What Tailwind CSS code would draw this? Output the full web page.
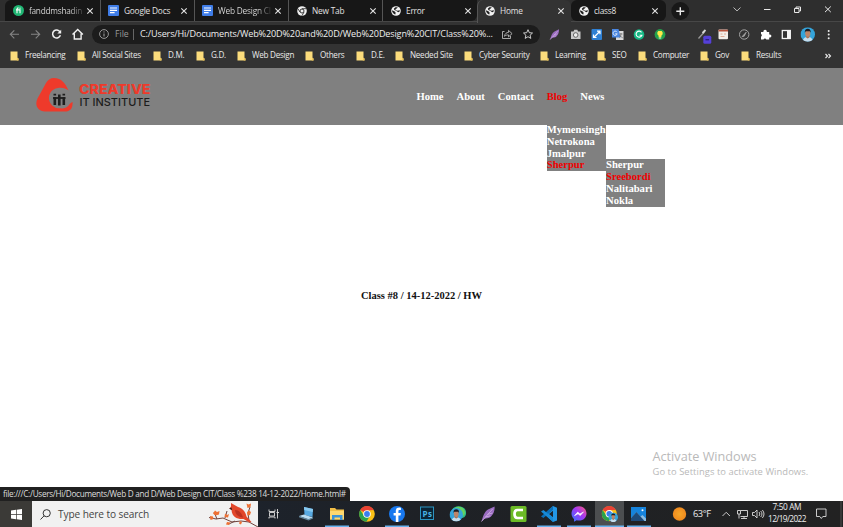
<!DOCTYPE html>
<html lang="en">
<head>
<meta charset="utf-8">
<title>Home</title>
<script src="https://cdn.jsdelivr.net/npm/@tailwindcss/browser@4"></script>
</head>
<body class="w-[843px] h-[527px] overflow-hidden bg-white font-['Open_Sans','Noto_Sans',sans-serif] flex flex-col relative">
<svg class="hidden">
  <symbol id="x" viewBox="0 0 8 8"><path d="M1.3 1.3l5.4 5.4M6.7 1.3L1.3 6.7" stroke="#e4e4e4" stroke-width="1.1"/></symbol>
  <symbol id="globe" viewBox="0 0 10 10"><circle cx="5" cy="5" r="4.8" fill="#f2f2f2"/><path d="M1 4.3L3.4 5.2 4.6 6.4 4.4 8.4 3 7.9 1.3 6zM4.3 1.2L6.8 1.3 5.8 2.6 4.6 2.9 4.6 4.2 7 4.8 8.7 4.1 8.5 5.8 7.1 6.2 5.9 5.3 3.4 4.1 2.8 2.7z" fill="#222"/></symbol>
  <symbol id="doc" viewBox="0 0 11 11"><rect width="11" height="11" rx="1" fill="#3f7de8"/><path d="M2 3h7M2 5.3h7M2 7.7h4.6" stroke="#fff" stroke-width="1.2"/></symbol>
  <symbol id="fold" viewBox="0 0 9 10"><path d="M.5.5h7v6.2l1 .8v2h-8z" fill="#fbdc7c"/><path d="M7.3 6.7l1.2.8v2H6.7z" fill="#e9c255"/></symbol>
  <symbol id="chrome" viewBox="0 0 16 16"><circle cx="8" cy="8" r="7.8" fill="#fbc116"/><path d="M8 8L1.2 4.1A7.8 7.8 0 0 1 14.8 4.1L8 4.4z" fill="#e94235"/><path d="M1.2 4.1A7.8 7.8 0 0 0 7.4 15.8L11 9.8 8 8 5 9.7z" fill="#2ba24c"/><circle cx="8" cy="8" r="3.8" fill="#fff"/><circle cx="8" cy="8" r="2.9" fill="#3b7ded"/></symbol>
  <symbol id="feather" viewBox="0 0 14 16"><path d="M.5 15.5C2 11 3 6 7 3.6L13.5.5C14 4 12.8 8 9.8 10.8 7.8 12.6 5 12.4 3.2 13z" fill="#9a6cc0"/><path d="M.5 15.5L11.8 2.8M4.5 11l4.8-1.2M6.5 8.4l5-1.4" stroke="#d9bdea" stroke-width=".7" fill="none"/></symbol>
  <symbol id="face" viewBox="0 0 14 14"><circle cx="7" cy="7" r="7" fill="#35a4da"/><path d="M2.400 12.300c.8-2.300 2.600-2.800 4.600-2.800s3.800.5 4.600 2.800a7 7 0 0 1-9.200 0z" fill="#c4dcec"/><path d="M5.400 7.500h3.200V10L7 11 5.400 10z" fill="#a87358"/><ellipse cx="7" cy="6" rx="2.500" ry="3.300" fill="#bd8569"/><path d="M4.200 5.300C3.800 2.400 5.200 1.400 7 1.400s3.200 1 2.800 3.900L9 3.900H5z" fill="#1c1c22"/></symbol>
</svg>

<!-- tab strip -->
<header class="h-[68px] shrink-0 bg-[#333333] text-[#e2e2e2] flex flex-col">
  <div class="h-[22px] flex bg-[#2e2e2e] border-b border-[#474747] text-[8.300px] tracking-[-0.2px] leading-[21px] whitespace-nowrap">
    <div class="ml-[5px] w-[96px] rounded-tl-md bg-[#171717] flex items-center pl-2 border-r border-[#555]">
      <svg class="size-[11px]" viewBox="0 0 11 11"><circle cx="5.5" cy="5.5" r="5.5" fill="#20b573"/><path d="M4 8.300V4.200Q4 2.900 5.500 2.900M3 4.900h4v3.400" stroke="#fff" stroke-width="1.100" fill="none"/><circle cx="7" cy="3.200" r=".6" fill="#fff"/></svg>
      <span class="ml-[5px] w-[54px] tracking-[-0.27px] bg-gradient-to-r from-[#e2e2e2] from-75% to-[#444] bg-clip-text text-transparent">fanddmshadin</span><svg class="size-2 ml-[3px]"><use href="#x"/></svg>
    </div>
    <div class="w-[94px] bg-[#171717] flex items-center pl-[7px] border-r border-[#555]">
      <svg class="size-[11px]"><use href="#doc"/></svg><span class="ml-[5px] w-[56px]">Google Docs</span><svg class="size-2"><use href="#x"/></svg>
    </div>
    <div class="w-[94px] bg-[#171717] flex items-center pl-[7px] border-r border-[#555]">
      <svg class="size-[11px]"><use href="#doc"/></svg><span class="ml-[5px] w-[53px] bg-gradient-to-r from-[#e2e2e2] from-75% to-[#333] bg-clip-text text-transparent">Web Design CI</span><svg class="size-2 ml-[3px]"><use href="#x"/></svg>
    </div>
    <div class="w-[94px] bg-[#171717] flex items-center pl-2 border-r border-[#555]">
      <svg class="size-[10px]" viewBox="0 0 10 10"><circle cx="5" cy="5" r="4.8" fill="#eee"/><circle cx="5" cy="5" r="2" fill="#eee" stroke="#222" stroke-width=".9"/><path d="M5 2.7h4.2M3 6.1L1 2.8M7 6.2L5 9.5" stroke="#222" stroke-width=".8"/></svg><span class="ml-[5px] w-[57px]">New Tab</span><svg class="size-2"><use href="#x"/></svg>
    </div>
    <div class="w-[94px] bg-[#171717] rounded-br-md flex items-center pl-2">
      <svg class="size-[10px]"><use href="#globe"/></svg><span class="ml-[5px] w-[58px]">Error</span><svg class="size-2"><use href="#x"/></svg>
    </div>
    <div class="w-[94px] h-[23px] pb-[2px] bg-[#333333] rounded-t-md border-l border-[#555] flex items-center pl-[7px]">
      <svg class="size-[10px]"><use href="#globe"/></svg><span class="ml-[5px] w-[57px]">Home</span><svg class="size-2"><use href="#x"/></svg>
    </div>
    <div class="w-[95px] bg-[#171717] rounded-b-md rounded-t-md flex items-center pl-2">
      <svg class="size-[10px]"><use href="#globe"/></svg><span class="ml-[5px] w-[57px]">class8</span><svg class="size-2"><use href="#x"/></svg>
    </div>
    <svg class="w-[177px] h-[21px]" viewBox="666 0 177 21" fill="none" stroke="#e8e8e8"><circle cx="680.3" cy="11" r="9" fill="#181818" stroke="none"/><path d="M676.3 11.2h8M680.3 7.2v8" stroke-width="1.4"/><path d="M733.500 7.500l3.500 3.400L740.500 7.500" stroke="#bbb"/><path d="M764 9.500h6.500"/><path d="M794.500 8.500h4.500v4h-4.500zM796 8.300V7h4.500v4h-1.300"/><path d="M825 6.500l5.800 5.600M830.800 6.500L825 12.100"/></svg>
  </div>
  <!-- address bar -->
  <div class="h-[24px] flex items-center">
    <svg class="w-[92px] h-[24px]" viewBox="0 22 92 24" fill="none"><path d="M19 34.300h-8.500M14.300 30.300l-4 4 4 4M31 34.300h8.500M35.700 30.300l4 4-4 4" stroke="#858585" stroke-width="1.100"/><path d="M60 31.800a4 4 0 1 0 .4 3.500" stroke="#f0f0f0" stroke-width="1.500"/><path d="M61.200 29.700v3.900h-3.900z" fill="#f0f0f0"/><path d="M72.500 34.500l5.200-5 5.200 5M74.300 33.500v5.500h6.800v-5.500" stroke="#f0f0f0" stroke-width="1.400"/></svg>
    <div class="w-[448px] h-[19px] rounded-full bg-[#1c1c1c] flex items-center text-[9.100px] leading-none whitespace-nowrap">
      <svg class="size-[10px] ml-[7px]" viewBox="0 0 10 10" fill="none" stroke="#a5a5a5"><circle cx="5" cy="5" r="4.400" stroke-width=".9"/><path d="M5 4.500v3M5 2.400v1.100"/></svg>
      <span class="ml-[6px] w-[18px] text-[8.700px] text-[#9a9a9a]">File</span><span class="w-px h-[11px] bg-[#666]"></span>
      <span class="ml-[6px] w-[359px] tracking-[-0.15px] text-[#eee]">C:/Users/Hi/Documents/Web%20D%20and%20D/Web%20Design%20CIT/Class%20%...</span>
      <svg class="w-[40px] h-[12px]" viewBox="499 28 40 12" fill="none" stroke="#b9b9b9"><path d="M504.500 31.500h-2v7h8V36M504.500 36.300c.3-2.700 2-3.800 4-3.900v-2l3.600 3.200-3.600 3.300v-2c-1.700 0-3 .4-4 1.400z" stroke-width=".9"/><path d="M528 29.700l1.300 3 3.200.3-2.400 2.200.7 3.200-2.800-1.700-2.800 1.700.7-3.200-2.400-2.200 3.200-.3z" stroke="#ddd" stroke-width=".9"/></svg>
    </div>
    <svg class="w-[303px] h-[24px]" viewBox="540 22 303 24">
      <use href="#feather" x="549" y="29" width="11" height="11"/>
      <path d="M571 31.500h2.500l.8-1.700h3l.8 1.700h2.400v7.500H571z" fill="#c9c9c9"/><circle cx="575.700" cy="35" r="2.300" fill="#eee" stroke="#666"/>
      <rect x="591.500" y="29" width="10.500" height="11" rx="1" fill="#2f80d3"/><path d="M593.700 37.500l6-6M597 31.200h3v3M593.500 34.500v3h3" stroke="#fff" fill="none" stroke-width="1.200"/>
      <rect x="616" y="31" width="7.500" height="9" fill="#d9d9d9"/><path d="M612 29h6.500l2 8.500H612z" fill="#4a86e0"/><path d="M617 32.200a2.100 2.100 0 1 0 .2 1.600h-2" stroke="#fff" stroke-width=".8" fill="none"/><path d="M619.500 34h3M621 33v1c0 2-1 3-1.500 3.500M619.800 35c1 2 2 2.500 3 2.800" stroke="#555" stroke-width=".6" fill="none"/>
      <circle cx="639" cy="34.500" r="5.300" fill="#15b884"/><path d="M641.500 32.300a3 3 0 1 0 .4 2.900H639.600" stroke="#fff" stroke-width="1.100" fill="none"/>
      <circle cx="660" cy="34.500" r="5.400" fill="#23a04d"/><path d="M660 30.500a2.800 2.800 0 0 0-1.400 5.200v1.500h2.800v-1.500a2.800 2.800 0 0 0-1.400-5.200z" fill="#ffe94a"/><path d="M658.800 38h2.400" stroke="#eee"/>
      <path d="M698.500 38.500l4-4.500 2-2" stroke="#999" stroke-width="1.300" fill="none"/><path d="M702.500 33l3-3" stroke="#d7d7d7" stroke-width="1.800"/><rect x="703.300" y="35.700" width="8" height="8" rx="1.500" fill="#5540d8"/><path d="M705.500 39.800h3.600" stroke="#1d1460"/>
      <rect x="718.500" y="29.500" width="9.500" height="9.700" rx="1" fill="#f3efe9"/><path d="M718.500 30.600h9.500" stroke="#b8553e" stroke-width="1.800"/><path d="M720.500 34h2M724 34h2M720.500 36.500h4" stroke="#d99c80" stroke-width=".8"/>
      <circle cx="744.200" cy="34.500" r="4.700" fill="none" stroke="#a3a3a3"/><path d="M742 36.700l4.200-4.500-2 4z" stroke="#a3a3a3" fill="#aaa" stroke-width=".8"/>
      <path d="M761 32h2.500a1.700 1.700 0 1 1 3.200 0h2.500v2.500a1.600 1.600 0 1 1 0 3V39.500h-2.900a1.500 1.500 0 0 0-2.800 0H761v-2.800a1.500 1.500 0 0 0 0-2.700z" fill="#fff"/>
      <rect x="782.300" y="30.500" width="8" height="8" fill="none" stroke="#f5f5f5" stroke-width="1.300"/><path d="M787 30.500h3.300v8H787z" fill="#f5f5f5"/>
      <use href="#face" x="800.500" y="27.200" width="14.500" height="14.500"/>
      <g fill="#eee"><circle cx="828.700" cy="31" r="1"/><circle cx="828.700" cy="34.600" r="1"/><circle cx="828.700" cy="38.200" r="1"/></g>
    </svg>
  </div>
  <!-- bookmarks -->
  <div class="h-[19px] flex items-center pl-2.5 text-[8.100px] tracking-[-0.26px] text-[#eaeaea] leading-none whitespace-nowrap">
    <div class="w-[67px] flex items-center gap-[6px]"><svg class="w-[9px] h-[10px]"><use href="#fold"/></svg>Freelancing</div>
    <div class="w-[76px] flex items-center gap-[6px]"><svg class="w-[9px] h-[10px]"><use href="#fold"/></svg>All Social Sites</div>
    <div class="w-[43px] flex items-center gap-[6px]"><svg class="w-[9px] h-[10px]"><use href="#fold"/></svg>D.M.</div>
    <div class="w-[41px] flex items-center gap-[6px]"><svg class="w-[9px] h-[10px]"><use href="#fold"/></svg>G.D.</div>
    <div class="w-[68px] flex items-center gap-[6px]"><svg class="w-[9px] h-[10px]"><use href="#fold"/></svg>Web Design</div>
    <div class="w-[51px] flex items-center gap-[6px]"><svg class="w-[9px] h-[10px]"><use href="#fold"/></svg>Others</div>
    <div class="w-[39px] flex items-center gap-[6px]"><svg class="w-[9px] h-[10px]"><use href="#fold"/></svg>D.E.</div>
    <div class="w-[69px] flex items-center gap-[6px]"><svg class="w-[9px] h-[10px]"><use href="#fold"/></svg>Needed Site</div>
    <div class="w-[76px] flex items-center gap-[6px]"><svg class="w-[9px] h-[10px]"><use href="#fold"/></svg>Cyber Security</div>
    <div class="w-[57px] flex items-center gap-[6px]"><svg class="w-[9px] h-[10px]"><use href="#fold"/></svg>Learning</div>
    <div class="w-[41px] flex items-center gap-[6px]"><svg class="w-[9px] h-[10px]"><use href="#fold"/></svg>SEO</div>
    <div class="w-[62px] flex items-center gap-[6px]"><svg class="w-[9px] h-[10px]"><use href="#fold"/></svg>Computer</div>
    <div class="w-[41px] flex items-center gap-[6px]"><svg class="w-[9px] h-[10px]"><use href="#fold"/></svg>Gov</div>
    <div class="w-[83px] flex items-center gap-[6px]"><svg class="w-[9px] h-[10px]"><use href="#fold"/></svg>Results</div>
    <svg class="w-[8px] h-[8px]" viewBox="0 0 8 8" fill="none" stroke="#eee" stroke-width="1.100"><path d="M1.500 2l2 2-2 2M4.500 2l2 2-2 2"/></svg>
  </div>
</header>

<!-- page -->
<main class="grow flex flex-col font-['Liberation_Serif',serif] font-bold text-[10.600px]">
  <nav class="h-[56.500px] shrink-0 bg-[#808080] flex text-white leading-[12px]">
    <svg class="ml-[36px] mt-[10px] w-[120px] h-[36px] shrink-0" viewBox="36 78 120 36">
      <path d="M54 78c-4 0-6.200 2-8 5L37.500 98.500c-3.200 6.500.3 13 7.300 13h20c5.500 0 8-3 7.800-9.500-1.600.5-2.800 1.800-4 3.500-2 2.500-5 3.200-8.600 2.800a10.300 10.300 0 1 1 .5-20.500c3.300 0 5.500 1 8 2.700C65.500 83.500 61.500 78 54 78z" fill="#ee3a2b"/>
      <path d="M54.800 97v8M59.300 94.500v11M63.800 97v8" stroke="#1e1e1e" stroke-width="2.600"/><path d="M53 98h12.500" stroke="#1e1e1e" stroke-width="1.800"/><path d="M53.500 94.700h2.600M62.500 94.700h2.600" stroke="#1e1e1e" stroke-width="1.800"/>
      <text x="79" y="94" font-family="Inter" font-weight="800" font-size="12.500" textLength="71.500" lengthAdjust="spacingAndGlyphs" fill="#ee3a2b">CREATIVE</text>
      <text x="79.500" y="106" font-family="Inter" font-weight="500" font-size="10.500" textLength="70.500" lengthAdjust="spacingAndGlyphs" fill="#1c1c1c">IT INSTITUTE</text>
    </svg>
    <ul class="ml-[260.500px] pt-[22.500px] flex gap-[13px]">
      <li>Home</li><li>About</li><li>Contact</li>
      <li class="relative"><span class="text-[#f00000]">Blog</span>
        <ul class="absolute left-0 top-[33.500px] w-[59.300px] h-[47px] bg-[#808080] leading-[11.800px]">
          <li>Mymensingh</li><li>Netrokona</li><li>Jmalpur</li>
          <li class="relative"><span class="text-[#f00000]">Sherpur</span>
            <ul class="absolute left-[59.300px] top-0 w-[59.300px] h-[47.500px] bg-[#808080]">
              <li>Sherpur</li><li class="text-[#f00000]">Sreebordi</li><li>Nalitabari</li><li>Nokla</li>
            </ul>
          </li>
        </ul>
      </li>
      <li>News</li>
    </ul>
  </nav>
  <h1 class="mt-[165px] text-center text-[10.500px] leading-[12px] text-[#111]">Class #8 / 14-12-2022 / HW</h1>
  <aside class="mt-[146px] ml-[652.500px] font-['Open_Sans'] font-normal text-[#b9b9b9] whitespace-nowrap">
    <div class="text-[12.700px] leading-[17px]">Activate Windows</div>
    <div class="text-[9.400px] leading-[13px] tracking-[0.060px]">Go to Settings to activate Windows.</div>
  </aside>
</main>

<div class="absolute left-0 top-[487px] w-[350px] h-[14px] bg-[#202020] rounded-tr-sm pl-[3px] text-[8.200px] leading-[13.500px] tracking-[-0.300px] text-[#ddd] whitespace-nowrap">file:///C:/Users/Hi/Documents/Web D and D/Web Design CIT/Class %238 14-12-2022/Home.html#</div>

<!-- taskbar -->
<footer class="h-[26px] shrink-0 flex bg-gradient-to-r from-[#1b2533] via-[#1e2126] to-[#222] text-white">
  <div class="w-[32px] bg-[#3b3a37] flex items-center justify-center"><svg class="size-[11px]" viewBox="0 0 11 11" fill="#fff"><path d="M0 1.500L5 .8V5.200H0zM5.700.7L11 0v5.200H5.700zM0 5.900h5v4.400L0 9.600zM5.700 5.900H11V11l-5.300-.7z"/></svg></div>
  <div class="w-[226px] bg-[#f1f1f1] flex items-center">
    <svg class="ml-[8px] size-[11px]" viewBox="0 0 11 11" fill="none" stroke="#333"><circle cx="6.700" cy="4.200" r="3.600"/><path d="M4.100 6.800L.5 10.500"/></svg>
    <span class="ml-[7px] w-[150px] shrink-0 text-[10.100px] tracking-[-0.49px] text-[#444] leading-none whitespace-nowrap"><span class="tracking-[-0.090px]">Type here to search</span></span>
    <svg class="w-[50px] h-[26px] shrink-0" viewBox="208 501 50 26"><path d="M209 517.500l7 1.500 7-1 9 4 9-1 8 1 9 5M217 519l-3-7M225 518l2-7M235 521l-6 3M249 521l-1-8 2-6" stroke="#70433d" stroke-width="1" fill="none"/><g fill="#ee7134"><path d="M215 510.500l2 1.500 2.500-1-.5 3.500-3.500 1-2.500-2zM225 513.500l2 1.500 2-1-1 3.500-3.500-.5zM246.500 503.500l2 1 2.500-1-.5 3.500-3 1zM247 512l2-1.500 2 1.500-1 3-2.500.5zM210 516l3 .5.5 2.500-3 1zM227 522l3.500.5-1.500 2.500-3-.5zM240 521l2 1-1 2.500-2-1z"/></g><path d="M231 503l7 4c5 1.500 7.500 5 8.500 9.500l5 5.500-2 .5-6-3.500c-6 .5-11.500-2-12-9l-2-1.500 1.500-2z" fill="#e2472b"/><path d="M235 510c4 0 7 3.500 8 7.500-5-.5-7.500-3-8-7.500z" fill="#bb3120"/><path d="M229 508.500l2.500-1 .7 2.700z" fill="#3b2220"/></svg>
  </div>
  <svg class="w-[585px] h-[26px]" viewBox="258 501 585 26">
    <rect x="595" y="501" width="29" height="26" fill="#4c4e50"/>
    <g fill="#69b3ef"><rect x="325" y="525.500" width="24" height="1.500"/><rect x="385" y="525.500" width="24" height="1.500"/><rect x="537" y="525.500" width="24" height="1.500"/><rect x="567" y="525.500" width="24" height="1.500"/><rect x="595" y="525.500" width="29" height="1.500"/><rect x="627" y="525.500" width="24" height="1.500"/></g>
    <path d="M269 509.500v2h6v-2M269 518.500v-1.500h6v1.500M269.500 512.500h5v3.500h-5zM277.500 509v9.500M276.500 512.500h2.500" stroke="#ddd" fill="none" stroke-width=".9"/>
    <path d="M304 507l9 2-.5 8-8-2z" fill="#57a9e2"/><path d="M304 507l9 2-.3 3-8.500-2z" fill="#86c8ef"/><path d="M299 516l5-1.500 9 3-4.500 2z" fill="#b9dcf3"/><path d="M299 516l9.500 3 4.500-1.500v1l-4.500 2-9.500-3.200z" fill="#678aa0"/>
    <path d="M330 508h5l1.500 1.500h7.500v10h-14z" fill="#f2bf47"/><rect x="330" y="511" width="14" height="8.500" fill="#ffd86f"/><path d="M332 520v-5h10.500v5h-2.500v-2.500h-5.500V520z" fill="#3d93d6"/>
    <use href="#chrome" x="359" y="506" width="16" height="16"/>
    <circle cx="397" cy="514" r="8" fill="#1878ef"/><path d="M395.800 522v-6.500h-2.200v-2.600h2.200v-1.800c0-2.400 1.400-3.500 3.400-3.500l1.700.1v2.400h-1.200c-1 0-1.300.5-1.300 1.300v1.500h2.500l-.4 2.600h-2.100v6.500z" fill="#fff"/>
    <rect x="420.500" y="507" width="13" height="12.500" fill="#0a2436" stroke="#2a93bf"/><text x="422.500" y="516.500" font-family="Open Sans" font-weight="700" font-size="8" fill="#49b4e5" textLength="9.500">Ps</text>
    <path d="M452 510c2-5 11-5 13.500 0 1.500 4 0 8-4 8l-6 3z" fill="#31bd88"/><path d="M455 508c4-3 10 0 10 5-1 4-4 3-4 3z" fill="#66d35f"/><use href="#face" x="449.500" y="508" width="13.500" height="13.500"/>
    <use href="#feather" x="480.500" y="506" width="15" height="16"/>
    <rect x="510.500" y="506" width="16" height="16" rx="1.500" fill="#6cbb26"/><path d="M523 510h-5.500q-3 0-3 4t3 4h5.500" fill="none" stroke="#fff" stroke-width="2.700"/>
    <path d="M553 506l4 1.800v12.600l-4 1.600-8.500-8z" fill="#2397e6"/><path d="M553 506v3.800l-9.500 8.200-2.500-1.500 7-6.300z" fill="#0a6fb8"/><path d="M541 511.500l2.500-1.500 9.500 8v4z" fill="#178ad6"/><path d="M553 510.700v6.600l-4-3.300z" fill="#1d232b"/>
    <defs><linearGradient id="ms" x1="0" y1="1" x2="1" y2="0"><stop stop-color="#2877ff"/><stop offset=".55" stop-color="#a338f4"/><stop offset="1" stop-color="#ff5c7b"/></linearGradient><radialGradient id="sun"><stop stop-color="#f6a629"/><stop offset="1" stop-color="#f08a1e"/></radialGradient></defs>
    <path d="M579 506.300c-4.500 0-7.500 3.200-7.500 7.200 0 2.300 1 4.200 2.500 5.500v2.800l2.700-1.500c5.500 1.400 9.800-2 9.800-6.800 0-4-3-7.200-7.500-7.200z" fill="url(#ms)"/><path d="M574.500 515.700l3.200-3.600 2.200 1.800 3.600-2-3.200 3.700-2.300-1.800z" fill="#fff" stroke="#fff" stroke-width=".6"/>
    <use href="#chrome" x="601.500" y="506" width="15.500" height="15.500"/><use href="#face" x="608.500" y="512.500" width="9.500" height="9.500"/>
    <path d="M631 507h15v14h-15z" fill="#1683dc"/><path d="M631 521v-3l5.500-6 4 4.500 2-1.500 3.500 3.500v2.500z" fill="#8dbce0"/><path d="M631 521v-3l5.500-6 8 9z" fill="#1d4a7a"/><circle cx="642.500" cy="510.300" r="1" fill="#fff"/>
    <circle cx="679.500" cy="514" r="6.700" fill="url(#sun)"/>
    <g font-family="Open Sans" fill="#eee"><text x="693" y="517.200" font-size="9.300" textLength="18">63°F</text><text x="772.500" y="510.300" font-size="8.300" textLength="29">7:50 AM</text><text x="768" y="522" font-size="8.300" textLength="38.500">12/19/2022</text></g>
    <g stroke="#ddd" fill="none" stroke-width=".9"><path d="M722.500 516l3.700-3.700 3.700 3.700"/><path d="M740.500 510.500h7v6h-7M737.500 510.500v3.500h3v-3.500zM739 514v4.500M741 518.500h6M744 516.500v2"/><path d="M752.500 512.500h2l2.500-2.500v8l-2.500-2.500h-2zM759 512c1 1.300 1 2.700 0 4M760.700 511c1.700 2 1.700 4 0 6M762.300 510c2.200 2.600 2.200 5.400 0 8"/><path d="M816.500 509h9.500v7.500h-3.200l-1.500 2-1.500-2h-3.300z"/><path d="M841 501v26" stroke="#555"/></g>
  </svg>
</footer>
</body>
</html>
